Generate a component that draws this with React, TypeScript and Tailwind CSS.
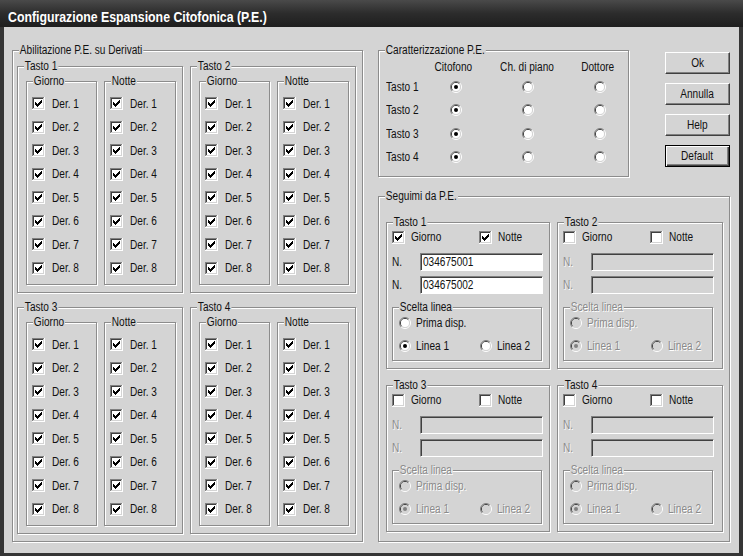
import React from "react";

const disabledText = "text-[#8a8a8a] [text-shadow:1px_1px_0_#ffffff]";

function T({ children, c = "" }: { children: React.ReactNode; c?: string }) {
  return (
    <span className={"inline-block origin-left scale-x-[0.84] whitespace-nowrap leading-[14px] " + c}>
      {children}
    </span>
  );
}

function TC({ children }: { children: React.ReactNode }) {
  return (
    <span className="inline-block origin-center scale-x-[0.84] whitespace-nowrap leading-[14px]">
      {children}
    </span>
  );
}

function Group({
  label,
  className = "",
  disabled = false,
  children,
}: {
  label: string;
  className?: string;
  disabled?: boolean;
  children?: React.ReactNode;
}) {
  return (
    <div
      className={
        "relative border border-[#8c8c8c] shadow-[inset_1px_1px_0_#ffffff,1px_1px_0_#ffffff] " +
        className
      }
    >
      <span
        className={
          "absolute left-[6px] top-[-8px] px-[1px] bg-[#d4d4d4] leading-[14px] whitespace-nowrap origin-left scale-x-[0.84] " +
          (disabled ? disabledText : "")
        }
      >
        {label}
      </span>
      {children}
    </div>
  );
}

function CheckBox({ checked }: { checked: boolean }) {
  return (
    <svg width="13" height="13" viewBox="0 0 13 13" shapeRendering="crispEdges" className="shrink-0">
      <rect x="0" y="0" width="13" height="13" fill="#ffffff" />
      <path d="M0 0h12v1H1v11H0z" fill="#808080" />
      <path d="M1 1h10v1H2v9H1z" fill="#404040" />
      <path d="M1 11h11v1H1z M11 1h1v11h-1z" fill="#d4d4d4" />
      <rect x="2" y="2" width="9" height="9" fill="#ffffff" />
      {checked && (
        <path
          d="M9 3h1v1h-1z M8 4h2v1h-2z M3 5h1v1h-1z M7 5h3v1h-3z M3 6h2v1h-2z M6 6h3v1h-3z M3 7h5v1h-5z M4 8h3v1h-3z M5 9h1v1h-1z"
          fill="#000000"
        />
      )}
    </svg>
  );
}

function Radio({ checked, disabled = false }: { checked: boolean; disabled?: boolean }) {
  return (
    <svg width="12" height="12" viewBox="0 0 12 12" className="shrink-0">
      <path d="M9.9 2.1 A5.5 5.5 0 0 0 2.1 9.9" stroke="#808080" strokeWidth="1" fill="none" />
      <path d="M2.1 9.9 A5.5 5.5 0 0 0 9.9 2.1" stroke="#ffffff" strokeWidth="1" fill="none" />
      <path d="M9.2 2.8 A4.5 4.5 0 0 0 2.8 9.2" stroke="#404040" strokeWidth="1" fill="none" />
      <path d="M2.8 9.2 A4.5 4.5 0 0 0 9.2 2.8" stroke="#d4d4d4" strokeWidth="1" fill="none" />
      <circle cx="6" cy="6" r="4" fill={disabled ? "#d4d4d4" : "#ffffff"} />
      {checked && <circle cx="6" cy="6" r="2" fill={disabled ? "#808080" : "#000000"} />}
    </svg>
  );
}

function DerRow({ n }: { n: number }) {
  return (
    <div className="flex items-center h-[23.5px]">
      <CheckBox checked />
      <span className="ml-[7px] flex">
        <T>Der. {n}</T>
      </span>
    </div>
  );
}

function DerCol({ title, w }: { title: string; w: string }) {
  return (
    <Group label={title} className={w + " h-[204px] pl-[5px] pt-[10px]"}>
      {[1, 2, 3, 4, 5, 6, 7, 8].map((n) => (
        <DerRow key={n} n={n} />
      ))}
    </Group>
  );
}

function TastoDer({ title }: { title: string }) {
  return (
    <Group label={title} className="w-[166px] h-[227px] pl-[8px] pt-[14px] flex items-start gap-[7px]">
      <DerCol title="Giorno" w="w-[71px]" />
      <DerCol title="Notte" w="w-[72px]" />
    </Group>
  );
}

function Field({ value, disabled }: { value: string; disabled: boolean }) {
  return (
    <div
      className={
        "w-[123px] h-[18px] border border-t-[#808080] border-l-[#808080] border-b-white border-r-white shadow-[inset_1px_1px_0_#404040] pl-[2px] flex items-center " +
        (disabled ? "bg-[#d4d4d4]" : "bg-white")
      }
    >
      <T>{value}</T>
    </div>
  );
}

function SegTasto({
  title,
  enabled,
  n1 = "",
  n2 = "",
}: {
  title: string;
  enabled: boolean;
  n1?: string;
  n2?: string;
}) {
  const dis = !enabled;
  const t = dis ? disabledText : "";
  return (
    <Group label={title} className="w-full h-[147px] pl-[5px] pt-[6px] flex flex-col">
      <div className="flex items-center h-[16px]">
        <div className="w-[87px] flex items-center">
          <CheckBox checked={enabled} />
          <span className="ml-[6px] flex">
            <T>Giorno</T>
          </span>
        </div>
        <div className="flex items-center">
          <CheckBox checked={enabled} />
          <span className="ml-[6px] flex">
            <T>Notte</T>
          </span>
        </div>
      </div>
      <div className="mt-[8px] flex items-center h-[18px]">
        <span className="w-[28px] flex">
          <T c={t}>N.</T>
        </span>
        <Field value={n1} disabled={dis} />
      </div>
      <div className="mt-[5px] flex items-center h-[18px]">
        <span className="w-[28px] flex">
          <T c={t}>N.</T>
        </span>
        <Field value={n2} disabled={dis} />
      </div>
      <Group
        label="Scelta linea"
        disabled={dis}
        className="mt-[13px] w-[150px] h-[54px] pl-[6px] pt-[8px] flex flex-col"
      >
        <div className="flex items-center h-[14px]">
          <Radio checked={false} disabled={dis} />
          <span className="ml-[5px] flex">
            <T c={t}>Prima disp.</T>
          </span>
        </div>
        <div className="mt-[9px] flex items-center h-[14px]">
          <div className="w-[81px] flex items-center">
            <Radio checked disabled={dis} />
            <span className="ml-[5px] flex">
              <T c={t}>Linea 1</T>
            </span>
          </div>
          <div className="flex items-center">
            <Radio checked={false} disabled={dis} />
            <span className="ml-[5px] flex">
              <T c={t}>Linea 2</T>
            </span>
          </div>
        </div>
      </Group>
    </Group>
  );
}

function Button({ label, isDefault = false }: { label: string; isDefault?: boolean }) {
  return (
    <div
      className={
        "w-[65px] h-[22px] flex items-center justify-center bg-[#d4d4d4] " +
        (isDefault
          ? "border border-black shadow-[inset_1px_1px_0_#ffffff,inset_-1px_-1px_0_#404040,inset_-2px_-2px_0_#808080]"
          : "border border-t-white border-l-white border-r-[#404040] border-b-[#404040] shadow-[inset_-1px_-1px_0_#808080]")
      }
    >
      <TC>{label}</TC>
    </div>
  );
}

export default function App() {
  const rows = ["Tasto 1", "Tasto 2", "Tasto 3", "Tasto 4"];
  return (
    <div className="w-[743px] h-[556px] bg-[#353535] flex flex-col font-['Liberation_Sans',Arial,sans-serif] text-[12px] text-[#111111]">
      <div className="h-[27px] shrink-0 pt-[6px] pl-[8px] flex items-center bg-linear-to-b from-[#4a4a4a] via-[#2c2c2c] to-[#1e1e1e]">
        <span className="inline-block origin-left scale-x-[0.82] text-white font-bold text-[15px] leading-[18px] whitespace-nowrap">
          Configurazione Espansione Citofonica (P.E.)
        </span>
      </div>
      <div className="mx-[4px] h-[526px] bg-[#d4d4d4] flex items-start pl-[8px] pt-[23px]">
        <Group
          label="Abilitazione P.E. su Derivati"
          className="w-[351px] h-[492px] pl-[4px] pt-[15px] grid grid-cols-[166px_166px] gap-x-[7px] gap-y-[14px] content-start"
        >
          <TastoDer title="Tasto 1" />
          <TastoDer title="Tasto 2" />
          <TastoDer title="Tasto 3" />
          <TastoDer title="Tasto 4" />
        </Group>

        <div className="ml-[15px] flex flex-col">
          <div className="flex items-start">
            <Group label="Caratterizzazione P.E." className="w-[251px] h-[127px] pl-[7px] pt-[7px]">
              <div className="grid grid-cols-[34px_72px_72px_72px]">
                <div className="h-[17px]" />
                <div className="h-[17px] flex items-center justify-center pr-[6px]">
                  <TC>Citofono</TC>
                </div>
                <div className="h-[17px] flex items-center justify-center pr-[2px]">
                  <TC>Ch. di piano</TC>
                </div>
                <div className="h-[17px] flex items-center justify-center pr-[4px]">
                  <TC>Dottore</TC>
                </div>
                {rows.map((r) => (
                  <React.Fragment key={r}>
                    <div className="h-[23.5px] flex items-center">
                      <T>{r}</T>
                    </div>
                    <div className="h-[23.5px] flex items-center justify-center">
                      <Radio checked />
                    </div>
                    <div className="h-[23.5px] flex items-center justify-center">
                      <Radio checked={false} />
                    </div>
                    <div className="h-[23.5px] flex items-center justify-center">
                      <Radio checked={false} />
                    </div>
                  </React.Fragment>
                ))}
              </div>
            </Group>
            <div className="ml-[36px] mt-[2px] flex flex-col gap-[9px]">
              <Button label="Ok" />
              <Button label="Annulla" />
              <Button label="Help" />
              <Button label="Default" isDefault />
            </div>
          </div>

          <Group
            label="Seguimi da P.E."
            className="mt-[19px] w-[352px] h-[346px] pl-[7px] pt-[25px] grid grid-cols-[164px_166px] gap-x-[7px] gap-y-[16px] content-start"
          >
            <SegTasto title="Tasto 1" enabled n1="034675001" n2="034675002" />
            <SegTasto title="Tasto 2" enabled={false} />
            <SegTasto title="Tasto 3" enabled={false} />
            <SegTasto title="Tasto 4" enabled={false} />
          </Group>
        </div>
      </div>
    </div>
  );
}
